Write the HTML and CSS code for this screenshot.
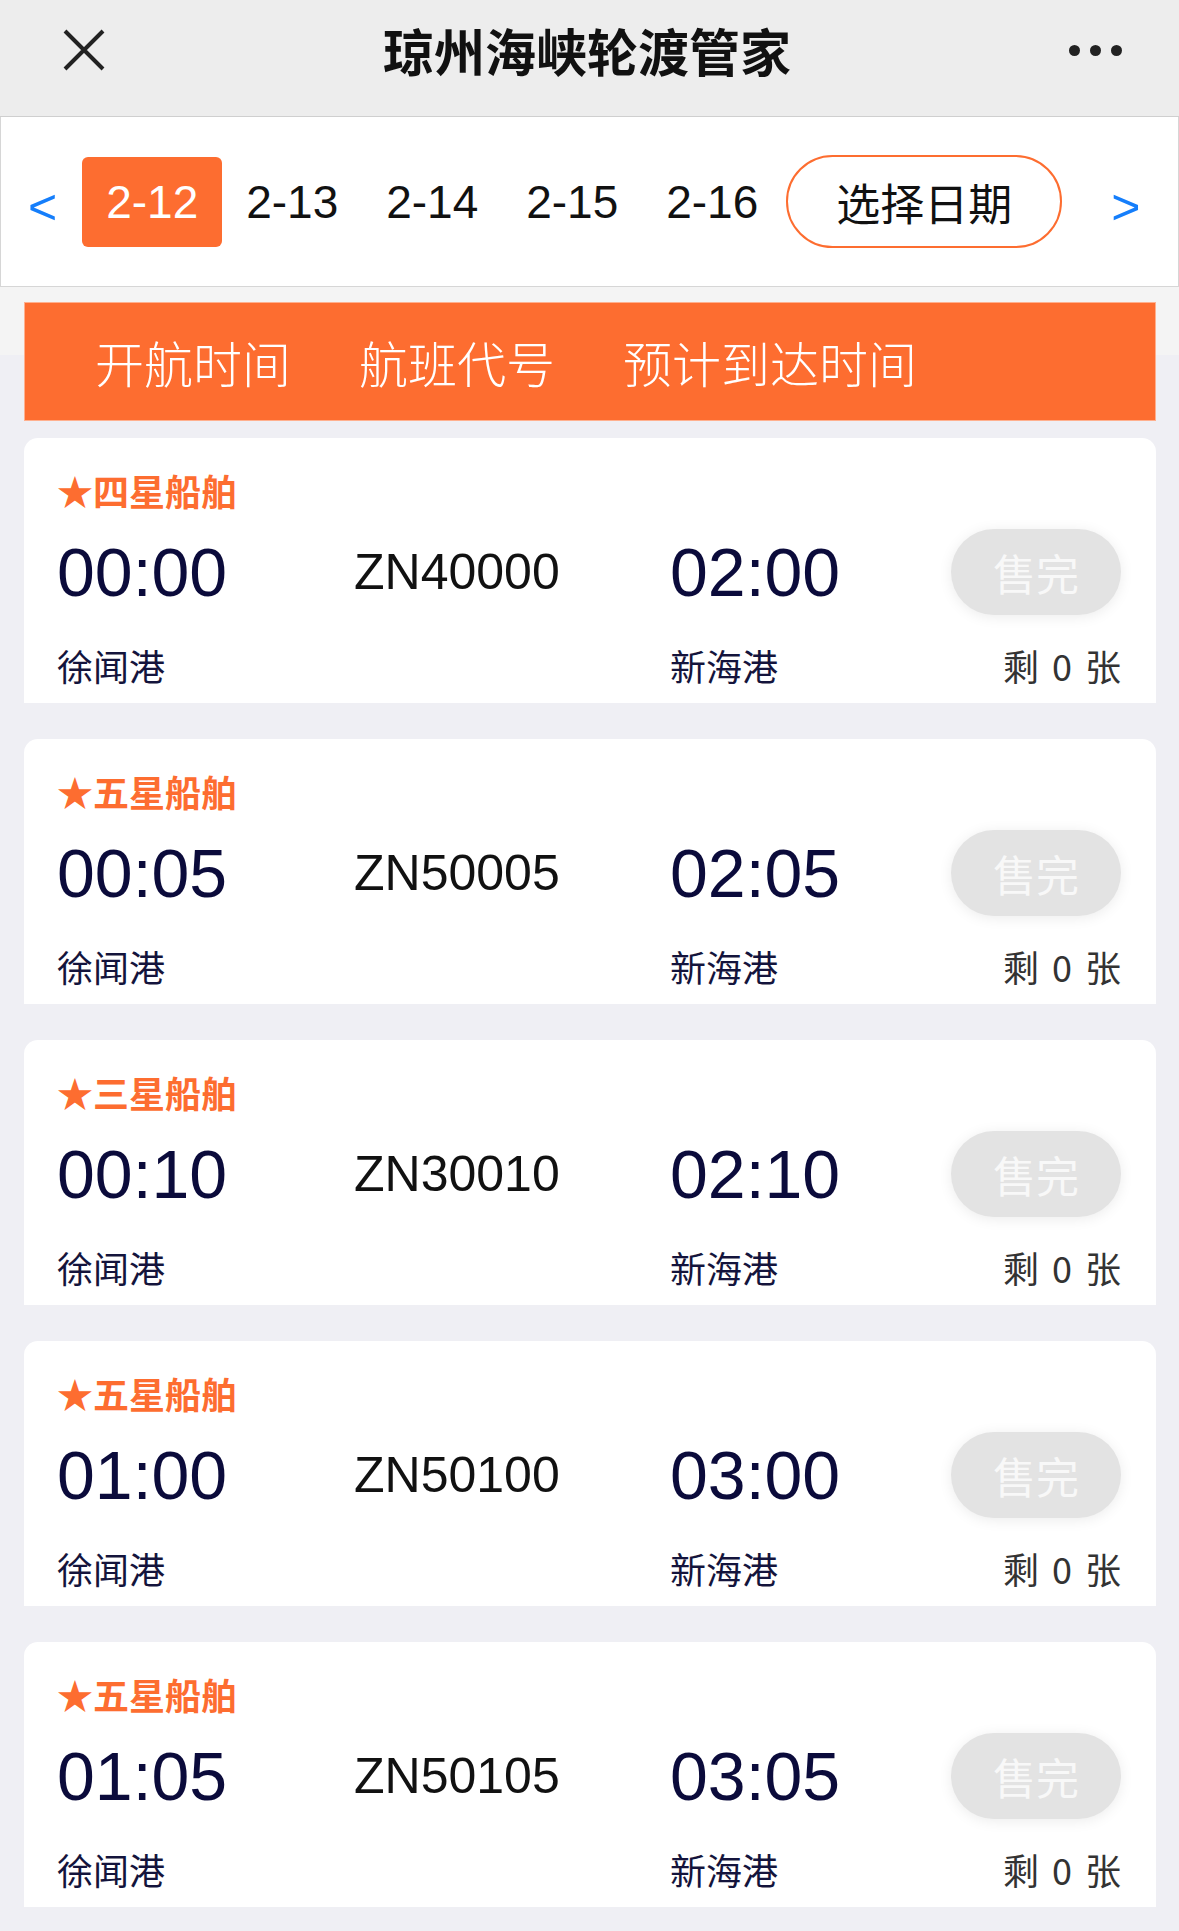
FILE: index.html
```html
<!DOCTYPE html>
<html lang="zh-CN">
<head>
    <meta charset="UTF-8">
    <meta name="viewport" content="width=device-width, initial-scale=1.0">
    <title>琼州海峡轮渡管家</title>
    <link rel="stylesheet" href="styles.css">
</head>
<body>
    <div class="navbar">
        <svg class="close" width="42" height="42" viewBox="0 0 42 42">
            <path d="M2 2 L40 40 M40 2 L2 40" stroke="#222" stroke-width="4" fill="none"/>
        </svg>
        <div class="title">琼州海峡轮渡管家</div>
        <div class="more"><span></span><span></span><span></span></div>
    </div>

    <div class="datebar">
        <span class="arrow prev">&lt;</span>
        <span class="day active">2-12</span>
        <span class="day">2-13</span>
        <span class="day">2-14</span>
        <span class="day">2-15</span>
        <span class="day">2-16</span>
        <span class="pick">选择日期</span>
        <span class="arrow next">&gt;</span>
    </div>

    <div class="content">
        <div class="thead">
            <span>开航时间</span>
            <span>航班代号</span>
            <span>预计到达时间</span>
        </div>

        <div class="card">
            <div class="level">★四星船舶</div>
            <div class="time">00:00</div>
            <div class="code">ZN40000</div>
            <div class="time">02:00</div>
            <div class="sold">售完</div>
            <div class="port">徐闻港</div>
            <div></div>
            <div class="port">新海港</div>
            <div class="left">剩 0 张</div>
        </div>

        <div class="card">
            <div class="level">★五星船舶</div>
            <div class="time">00:05</div>
            <div class="code">ZN50005</div>
            <div class="time">02:05</div>
            <div class="sold">售完</div>
            <div class="port">徐闻港</div>
            <div></div>
            <div class="port">新海港</div>
            <div class="left">剩 0 张</div>
        </div>

        <div class="card">
            <div class="level">★三星船舶</div>
            <div class="time">00:10</div>
            <div class="code">ZN30010</div>
            <div class="time">02:10</div>
            <div class="sold">售完</div>
            <div class="port">徐闻港</div>
            <div></div>
            <div class="port">新海港</div>
            <div class="left">剩 0 张</div>
        </div>

        <div class="card">
            <div class="level">★五星船舶</div>
            <div class="time">01:00</div>
            <div class="code">ZN50100</div>
            <div class="time">03:00</div>
            <div class="sold">售完</div>
            <div class="port">徐闻港</div>
            <div></div>
            <div class="port">新海港</div>
            <div class="left">剩 0 张</div>
        </div>

        <div class="card">
            <div class="level">★五星船舶</div>
            <div class="time">01:05</div>
            <div class="code">ZN50105</div>
            <div class="time">03:05</div>
            <div class="sold">售完</div>
            <div class="port">徐闻港</div>
            <div></div>
            <div class="port">新海港</div>
            <div class="left">剩 0 张</div>
        </div>
    </div>
</body>
</html>
```

FILE: styles.css
```css
body {
    margin: 0;
    background: #efeff4;
    font-family: "Liberation Sans", "Noto Sans CJK SC", sans-serif;
}
.navbar {
    height: 100px;
    padding: 0 57px 16px 63px;
    display: flex;
    align-items: center;
    justify-content: space-between;
    background: #ededed;
    border-bottom: 1px solid #cfcfcf;
}
.close {
    display: block;
}
.title {
    font-family: "Noto Sans CJK SC", sans-serif;
    font-size: 51px;
    font-weight: 700;
    color: #111;
    line-height: 60px;
}
.more {
    display: flex;
    gap: 10px;
}
.more span {
    width: 11px;
    height: 11px;
    border-radius: 50%;
    background: #222;
}
.datebar {
    height: 169px;
    display: flex;
    align-items: center;
    padding-left: 27px;
    background: #fff;
    border: 1px solid #d6d6d6;
    border-top: none;
}
.arrow {
    color: #157efb;
    font-size: 50px;
    line-height: 60px;
    margin-top: 10px;
}
.prev {
    margin-right: 25px;
}
.next {
    margin-left: 49px;
}
.day {
    width: 140px;
    height: 90px;
    line-height: 90px;
    text-align: center;
    font-size: 46px;
    color: #111;
}
.day.active {
    background: #fd6d30;
    color: #fff;
    border-radius: 6px;
}
.pick {
    box-sizing: border-box;
    width: 276px;
    height: 93px;
    margin-left: 4px;
    border: 2px solid #fd6d30;
    border-radius: 47px;
    display: flex;
    align-items: center;
    justify-content: center;
    font-family: "Noto Sans CJK SC", sans-serif;
    font-size: 44px;
    color: #111;
}
.content {
    padding: 15px 23px 0;
    background: linear-gradient(to bottom, #f4f4f4 68px, #efeff4 68px);
}
.thead {
    height: 119px;
    display: flex;
    align-items: center;
    gap: 68px;
    padding-left: 70px;
    background: #fd6d30;
    border: 1px solid #ffb08e;
    box-sizing: border-box;
    margin: 0 0 17px 1px;
    font-family: "Noto Sans CJK SC", sans-serif;
    font-size: 49px;
    font-weight: 300;
    color: #fff;
}
.card {
    width: 1132px;
    box-sizing: border-box;
    margin: 0 0 36px 1px;
    padding: 32px 35px 18px 33px;
    background: #fff;
    border-radius: 14px 14px 0 0;
    display: grid;
    grid-template-columns: 297px 316px 1fr 170px;
    grid-template-rows: 40px 86px 51px;
    row-gap: 19px;
    align-items: center;
}
.level {
    grid-column: 1 / -1;
    font-family: "Noto Sans CJK SC", sans-serif;
    font-size: 36px;
    font-weight: 700;
    color: #fd6d30;
    line-height: 40px;
}
.time {
    font-size: 68px;
    line-height: 68px;
    color: #0b0b3b;
}
.code {
    font-size: 50px;
    line-height: 56px;
    color: #111;
}
.sold {
    height: 86px;
    border-radius: 43px;
    background: #e3e3e3;
    box-shadow: 0 2px 14px rgba(0, 0, 0, 0.08);
    display: flex;
    align-items: center;
    justify-content: center;
    font-family: "Noto Sans CJK SC", sans-serif;
    font-size: 43px;
    color: #f8f8f8;
}
.port {
    align-self: end;
    font-family: "Noto Sans CJK SC", sans-serif;
    font-size: 36px;
    line-height: 40px;
    color: #14143c;
}
.left {
    align-self: end;
    text-align: right;
    font-family: "Noto Sans CJK SC", sans-serif;
    font-size: 36px;
    line-height: 40px;
    word-spacing: 5px;
    color: #333;
}
```
